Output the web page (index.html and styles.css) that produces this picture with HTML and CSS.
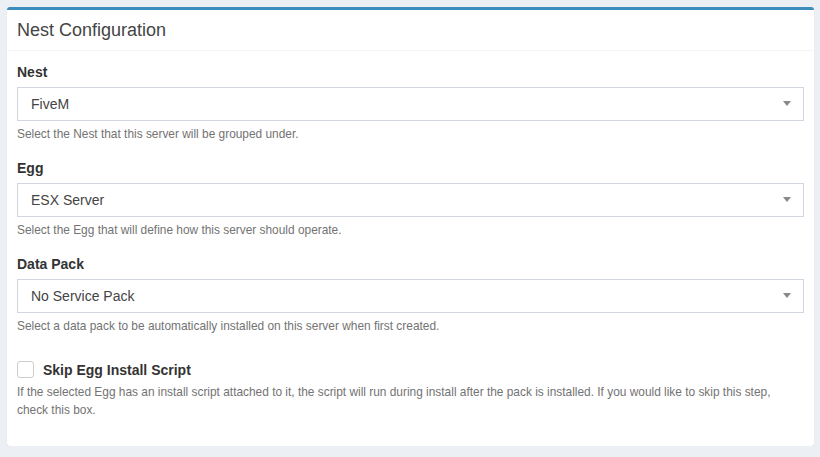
FILE: index.html
```html
<!DOCTYPE html>
<html>
<head>
<meta charset="utf-8">
<link rel="stylesheet" href="styles.css">
</head>
<body>
<div class="box">
  <div class="box-header"><h3 class="box-title">Nest Configuration</h3></div>
  <div class="box-body">
    <div class="form-group">
      <label class="control-label">Nest</label>
      <div class="select"><span class="select-text">FiveM</span><span class="arrow"></span></div>
      <p class="help">Select the Nest that this server will be grouped under.</p>
    </div>
    <div class="form-group">
      <label class="control-label">Egg</label>
      <div class="select"><span class="select-text">ESX Server</span><span class="arrow"></span></div>
      <p class="help">Select the Egg that will define how this server should operate.</p>
    </div>
    <div class="form-group">
      <label class="control-label">Data Pack</label>
      <div class="select"><span class="select-text">No Service Pack</span><span class="arrow"></span></div>
      <p class="help">Select a data pack to be automatically installed on this server when first created.</p>
    </div>
    <div class="form-group check-group">
      <div class="checkbox-row"><span class="checkbox"></span><span class="check-label">Skip Egg Install Script</span></div>
      <p class="help help-lg">If the selected Egg has an install script attached to it, the script will run during install after the pack is installed. If you would like to skip this step, check this box.</p>
    </div>
  </div>
</div>
</body>
</html>
```
FILE: styles.css
```css
html, body { margin: 0; padding: 0; }
body {
  background: #ecf0f5;
  font-family: "Liberation Sans", Arial, sans-serif;
  font-size: 14px;
  color: #333;
  padding: 7px 6px 0 7px;
}
.box {
  background: #fff;
  border-top: 3px solid #3c8dbc;
  border-radius: 3px;
  box-shadow: 0 1px 1px rgba(0,0,0,0.12);
}
.box-header {
  padding: 11px 10px 9px;
  border-bottom: 1px solid #f4f4f4;
}
.box-title {
  margin: 0;
  font-size: 18px;
  line-height: 1.1;
  font-weight: normal;
  color: #444;
}
.box-body {
  padding: 11px 10px 12px;
}
.form-group { margin-bottom: 15px; }
.control-label {
  display: block;
  font-weight: bold;
  line-height: 20px;
  margin-bottom: 5px;
  color: #333;
}
.select {
  height: 34px;
  box-sizing: border-box;
  border: 1px solid #d2d6de;
  display: flex;
  align-items: center;
  justify-content: space-between;
  padding: 0 12px 0 13px;
  color: #444;
}
.arrow {
  width: 0; height: 0;
  border-style: solid;
  border-width: 5px 4px 0 4px;
  border-color: #888 transparent transparent transparent;
}
.help {
  margin: 5px 0 0;
  font-size: 11.9px;
  line-height: 17px;
  color: #737373;
}
.check-group { margin-top: 25px; }
.checkbox-row {
  display: flex;
  align-items: center;
  height: 20px;
}
.checkbox {
  width: 17px; height: 17px;
  box-sizing: border-box;
  border: 1px solid #ccc;
  border-radius: 3px;
  background: #fff;
  margin-right: 9px;
}
.check-label { font-weight: bold; }
.help-lg { line-height: 18px; margin-top: 3px; }
```
